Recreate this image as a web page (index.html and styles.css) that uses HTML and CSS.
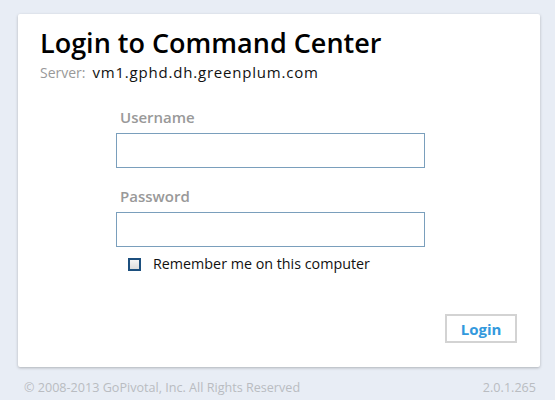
FILE: index.html
```html
<!DOCTYPE html>
<html>
<head>
<meta charset="utf-8">
<link rel="stylesheet" href="styles.css">
</head>
<body>
<div class="page">
  <div class="card">
    <h1 class="title">Login to Command Center</h1>
    <div class="server"><span class="server-label">Server:</span><span class="server-name">vm1.gphd.dh.greenplum.com</span></div>
    <form class="form">
      <label class="label">Username</label>
      <input class="input" type="text">
      <label class="label label-pw">Password</label>
      <input class="input" type="password">
      <div class="remember"><span class="check"></span><span class="remember-text">Remember me on this computer</span></div>
    </form>
    <div class="actions"><button class="btn" type="button">Login</button></div>
  </div>
  <div class="footer"><span>© 2008-2013 GoPivotal, Inc. All Rights Reserved</span><span>2.0.1.265</span></div>
</div>
</body>
</html>
```
FILE: styles.css
```css
html, body { margin: 0; padding: 0; }
body {
  background: #e8edf5;
  font-family: "Open Sans", "Liberation Sans", sans-serif;
  width: 555px;
  height: 400px;
  overflow: hidden;
}
.page { padding: 14px 15px 0 18px; }
.card {
  box-sizing: border-box;
  width: 522px;
  height: 353px;
  background: #fff;
  border-radius: 2px;
  box-shadow: 0 1px 3px rgba(0,0,0,0.25);
  padding: 11px 23px 0 22px;
  display: flex;
  flex-direction: column;
}
.title {
  margin: 0;
  font-size: 27px;
  font-weight: 600;
  color: #000;
  line-height: 36px;
}
.server { font-size: 15px; line-height: 20px; margin-top: 1px; }
.server-label { color: #999; font-size: 14px; margin-right: 7px; }
.server-name { color: #111; letter-spacing: 0.8px; }
.form {
  display: flex;
  flex-direction: column;
  margin: 24px 0 0 76px;
  width: 309px;
}
.label {
  color: #999;
  font-size: 15px;
  font-weight: 600;
  line-height: 20px;
  padding-left: 4px;
  margin-bottom: 6px;
}
.label-pw { margin-top: 18px; }
.input {
  box-sizing: border-box;
  width: 309px;
  height: 35px;
  border: 1px solid #7a9fbc;
  margin: 0;
  padding: 0 6px;
  background: #fff;
}
.remember {
  display: flex;
  align-items: center;
  margin-top: 7px;
  padding-left: 12px;
}
.check {
  box-sizing: border-box;
  width: 13px;
  height: 13px;
  border: 2px solid #1c4f7e;
  background: linear-gradient(#f4f4f4, #dcdcdc);
  margin-right: 12px;
}
.remember-text { font-size: 14.3px; color: #111; line-height: 20px; }
.actions {
  display: flex;
  justify-content: flex-end;
  margin-top: 40px;
}
.btn {
  box-sizing: border-box;
  width: 72px;
  height: 29px;
  background: #fff;
  border: 2px solid #d3d3d3;
  color: #3399dd;
  font-family: "Open Sans", "Liberation Sans", sans-serif;
  font-weight: 700;
  font-size: 15px;
  padding: 0;
}
.footer {
  display: flex;
  justify-content: space-between;
  padding: 12px 4px 0 6px;
  font-size: 12.6px;
  color: #b9bcc1;
  line-height: 18px;
}
```
